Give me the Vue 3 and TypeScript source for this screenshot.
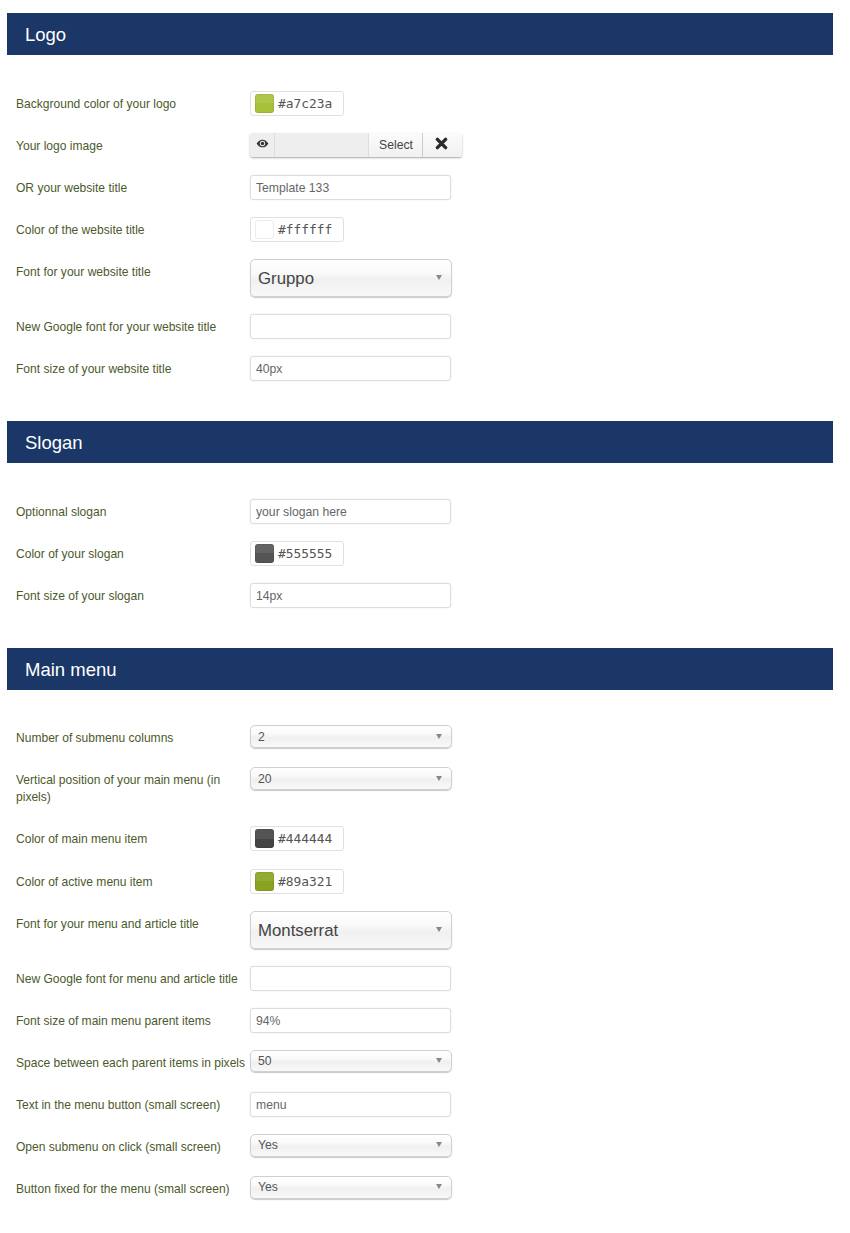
<template>
  <div class="page">
    <section v-for="section in sections" :key="section.title" class="section">
      <h2 class="banner">{{ section.title }}</h2>
      <div class="rows">
        <div v-for="row in section.rows" :key="row.label" class="row">
          <label class="label">{{ row.label }}</label>

          <div v-if="row.type === 'color'" class="color-field">
            <span class="swatch" :style="{ backgroundColor: row.value }"></span>
            <span class="color-code">{{ row.value }}</span>
          </div>

          <div v-else-if="row.type === 'media'" class="media-field">
            <span class="media-eye">
              <svg width="13" height="9" viewBox="0 0 14 10">
                <path d="M0.5 5C2.3 2 4.4 0.7 7 0.7S11.7 2 13.5 5C11.7 8 9.6 9.3 7 9.3S2.3 8 0.5 5Z" fill="#333" />
                <circle cx="7" cy="5" r="3" fill="#eee" />
                <circle cx="7" cy="5" r="1.9" fill="#333" />
              </svg>
            </span>
            <span class="media-path"></span>
            <span class="media-btn media-select">Select</span>
            <span class="media-btn media-clear">
              <svg width="13" height="13" viewBox="0 0 13 13">
                <path d="M2.4 2.4L10.6 10.6M10.6 2.4L2.4 10.6" stroke="#2b2b2b" stroke-width="3.4" stroke-linecap="round" fill="none" />
              </svg>
            </span>
          </div>

          <div v-else-if="row.type === 'select' || row.type === 'select-lg'" class="select" :class="{ 'select-lg': row.type === 'select-lg' }">
            <span>{{ row.value }}</span>
            <i class="caret"></i>
          </div>

          <input v-else class="text-input" type="text" :value="row.value" />
        </div>
      </div>
    </section>
  </div>
</template>

<script setup lang="ts">
interface Row {
  label: string;
  type: 'text' | 'color' | 'media' | 'select' | 'select-lg';
  value?: string;
}

const sections: { title: string; rows: Row[] }[] = [
  {
    title: 'Logo',
    rows: [
      { label: 'Background color of your logo', type: 'color', value: '#a7c23a' },
      { label: 'Your logo image', type: 'media' },
      { label: 'OR your website title', type: 'text', value: 'Template 133' },
      { label: 'Color of the website title', type: 'color', value: '#ffffff' },
      { label: 'Font for your website title', type: 'select-lg', value: 'Gruppo' },
      { label: 'New Google font for your website title', type: 'text', value: '' },
      { label: 'Font size of your website title', type: 'text', value: '40px' },
    ],
  },
  {
    title: 'Slogan',
    rows: [
      { label: 'Optionnal slogan', type: 'text', value: 'your slogan here' },
      { label: 'Color of your slogan', type: 'color', value: '#555555' },
      { label: 'Font size of your slogan', type: 'text', value: '14px' },
    ],
  },
  {
    title: 'Main menu',
    rows: [
      { label: 'Number of submenu columns', type: 'select', value: '2' },
      { label: 'Vertical position of your main menu (in pixels)', type: 'select', value: '20' },
      { label: 'Color of main menu item', type: 'color', value: '#444444' },
      { label: 'Color of active menu item', type: 'color', value: '#89a321' },
      { label: 'Font for your menu and article title', type: 'select-lg', value: 'Montserrat' },
      { label: 'New Google font for menu and article title', type: 'text', value: '' },
      { label: 'Font size of main menu parent items', type: 'text', value: '94%' },
      { label: 'Space between each parent items in pixels', type: 'select', value: '50' },
      { label: 'Text in the menu button (small screen)', type: 'text', value: 'menu' },
      { label: 'Open submenu on click (small screen)', type: 'select', value: 'Yes' },
      { label: 'Button fixed for the menu (small screen)', type: 'select', value: 'Yes' },
    ],
  },
];
</script>

<style>
html, body { background: #fff; }
</style>

<style scoped>
.page {
  box-sizing: border-box;
  width: 850px;
  height: 1233px;
  padding: 13px 17px 0 7px;
  font-family: "Liberation Sans", Arial, sans-serif;
  overflow: hidden;
}
.section { margin-bottom: 40px; }
.banner {
  margin: 0;
  height: 42px;
  padding-left: 18px;
  background: #1a3767;
  color: #fff;
  font-size: 18.5px;
  font-weight: normal;
  line-height: 44px;
}
.rows { padding: 35.5px 0 0 9px; }
.row { display: flex; align-items: flex-start; margin-bottom: 17.1px; }
.row:last-child { margin-bottom: 0; }
.label {
  box-sizing: border-box;
  flex: 0 0 234px;
  padding: 5px 0 3px;
  font-size: 12.05px;
  line-height: 17px;
  color: #4b5a2c;
  white-space: normal;
}
.text-input {
  box-sizing: border-box;
  width: 201px;
  height: 25px;
  padding: 1px 5px 0;
  border: 1px solid #ddd;
  border-radius: 3px;
  box-shadow: 0 0 2px rgba(0, 0, 0, 0.08);
  background: #fff;
  font-family: inherit;
  font-size: 12.2px;
  color: #666;
  outline: none;
}
.color-field {
  box-sizing: border-box;
  display: flex;
  align-items: center;
  gap: 4.5px;
  width: 94px;
  height: 25px;
  padding-left: 3.5px;
  border: 1px solid #e0e0e0;
  border-radius: 3px;
  background: #fff;
}
.swatch {
  position: relative;
  width: 19px;
  height: 19px;
  border-radius: 3px;
  overflow: hidden;
  box-shadow: inset 0 0 0 1px rgba(0, 0, 0, 0.08);
}
.swatch::after {
  content: "";
  position: absolute;
  inset: 0 0 50% 0;
  background: rgba(255, 255, 255, 0.09);
}
.color-code {
  font-family: "DejaVu Sans Mono", monospace;
  font-size: 12.9px;
  color: #555;
}
.media-field {
  display: flex;
  width: 212px;
  height: 24.5px;
  border-radius: 3px;
  box-shadow: 0 1px 2px rgba(0, 0, 0, 0.35);
  font-size: 12.2px;
  color: #444;
}
.media-eye {
  box-sizing: border-box;
  display: flex;
  align-items: center;
  justify-content: center;
  width: 25px;
  padding-bottom: 3px;
  background: #eee;
  border-right: 1px solid #ddd;
  border-radius: 3px 0 0 3px;
}
.media-path { flex: 1; background: #eee; }
.media-btn {
  box-sizing: border-box;
  display: flex;
  align-items: center;
  justify-content: center;
  background: linear-gradient(#fbfbfb, #f1f1f1);
}
.media-select { width: 55px; padding-left: 1px; border-right: 1px solid #ccc; border-left: 1px solid #ddd; }
.media-clear { width: 39px; padding: 0 2px 2px 0; border-radius: 0 3px 3px 0; }
.select {
  box-sizing: border-box;
  position: relative;
  display: flex;
  align-items: center;
  width: 202px;
  height: 22.5px;
  padding-left: 7px;
  border: 1px solid #d0d0d0;
  border-radius: 5px;
  box-shadow: 0 1px 1px rgba(0, 0, 0, 0.22);
  background: linear-gradient(#fff 0%, #fafafa 35%, #f0f0f0 55%, #f8f8f8 100%);
  font-size: 12.2px;
  color: #555;
}
.select-lg {
  height: 38px;
  padding-top: 2px;
  font-size: 16.8px;
  color: #444;
}
.caret {
  position: absolute;
  right: 9px;
  top: 50%;
  margin-top: -3px;
  width: 0;
  height: 0;
  border-left: 3px solid transparent;
  border-right: 3px solid transparent;
  border-top: 5px solid #888;
}
</style>
